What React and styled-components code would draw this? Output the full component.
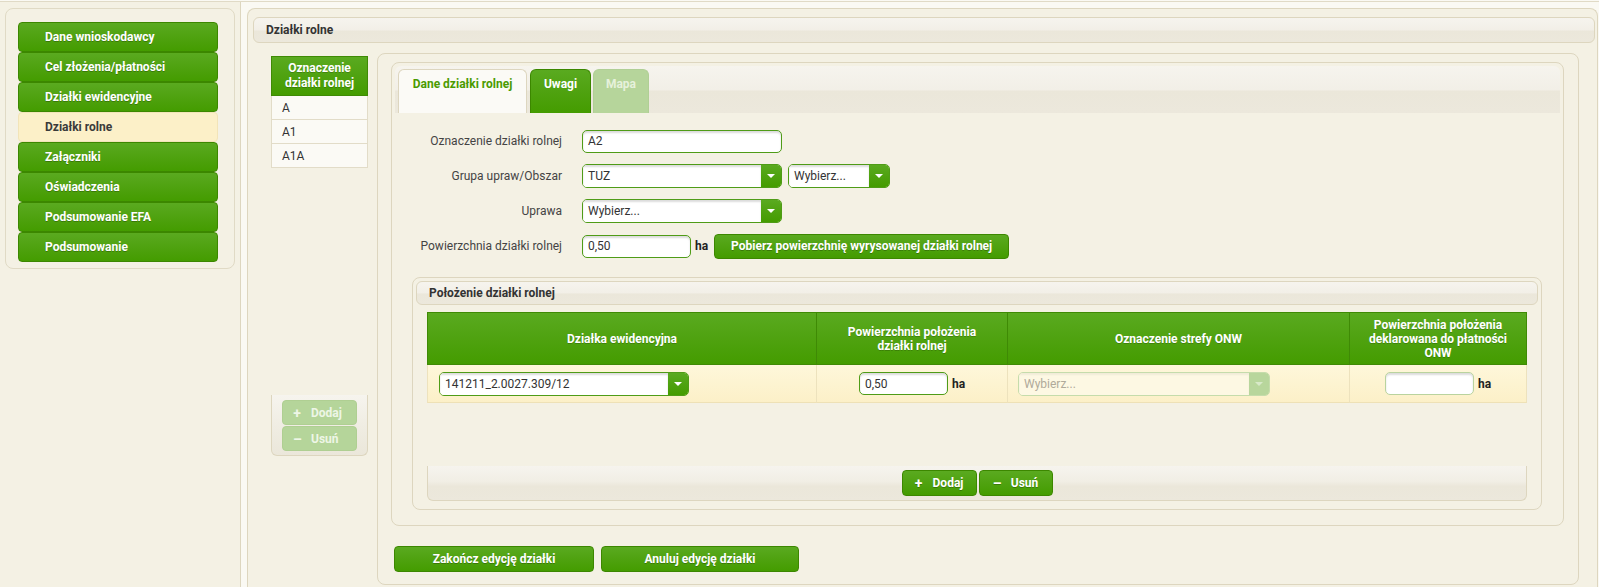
import styled, { createGlobalStyle } from "styled-components";

const GlobalStyle = createGlobalStyle`
  html, body {
    margin: 0;
    height: 100%;
    overflow: hidden;
    background: #faf9f3;
    font-family: Roboto, "Liberation Sans", sans-serif;
    font-size: 12px;
    color: #333;
  }
  * { box-sizing: border-box; }
`;

const green = "linear-gradient(#5aaa20 0%, #4fa210 50%, #449c00 100%)";
const gloss = "linear-gradient(#f6f4ee 0%, #f2efe7 50%, #ebe7da 54%, #ece8dc 100%)";

const Page = styled.div`
  display: flex;
  height: 586px;
  margin-top: 1px;
  border-top: 1px solid #e0dac6;
`;

const Sidebar = styled.aside`
  width: 241px;
  flex: none;
  padding-top: 6px;
  background: #f4f1e4;
  border-right: 1px solid #ddd6bf;
`;

const NavCard = styled.nav`
  margin-left: 5px;
  width: 230px;
  padding: 13px 0 6px 12px;
  border: 1px solid #e0dac5;
  border-radius: 8px;
  display: flex;
  flex-direction: column;
`;

const NavButton = styled.div`
  width: 200px;
  height: 30px;
  padding-left: 26px;
  display: flex;
  align-items: center;
  font-weight: 700;
  font-size: 12px;
  border-radius: 4px;
  border: 1px solid ${(p) => (p.$active ? "#f2e4b8" : "#3c8700")};
  background: ${(p) => (p.$active ? "#fcf0c8" : green)};
  color: ${(p) => (p.$active ? "#3a3a3a" : "#fff")};
  text-shadow: ${(p) => (p.$active ? "none" : "0 1px 0 rgba(0,0,0,0.25)")};
`;

const Main = styled.main`
  flex: 1;
  padding: 6px 1px 0 6px;
  background: #faf9f3;
  display: flex;
`;

const MainCard = styled.section`
  flex: 1;
  background: #f4f1e4;
  border: 1px solid #ddd6bf;
  border-bottom: none;
  border-radius: 8px 8px 0 0;
  padding: 8px 2px 0 5px;
`;

const HeaderBar = styled.div`
  height: 26px;
  display: flex;
  align-items: center;
  padding-left: 12px;
  font-weight: 700;
  font-size: 12px;
  color: #333;
  background: ${gloss};
  border: 1px solid #ddd6bf;
  border-radius: 6px;
`;

const Body = styled.div`
  display: flex;
  margin-top: 10px;
`;

const ListColumn = styled.div`
  width: 97px;
  height: 400px;
  margin: 3px 0 0 18px;
  display: flex;
  flex-direction: column;
  justify-content: space-between;
`;

const ListTable = styled.div`
  display: flex;
  flex-direction: column;
`;

const ListHead = styled.div`
  height: 40px;
  background: ${green};
  border: 1px solid #3f8a05;
  color: #fff;
  font-weight: 700;
  text-align: center;
  line-height: 15px;
  padding-top: 4px;
  text-shadow: 0 1px 0 rgba(0,0,0,0.2);
`;

const ListRow = styled.div`
  height: 24px;
  display: flex;
  align-items: center;
  padding-left: 10px;
  background: #fbfaf5;
  border: 1px solid #e2dcc8;
  border-top: none;
  color: #333;
`;

const ListFooter = styled.div`
  height: 61px;
  padding: 5px 0 0 10px;
  border: 1px solid #ddd6bf;
  border-top: none;
  border-radius: 0 0 6px 6px;
  background: linear-gradient(#f6f4ee 0%, #f0ede3 50%, #ebe7da 100%);
  display: flex;
  flex-direction: column;
  gap: 1px;
`;

const GreenButton = styled.button`
  width: ${(p) => p.$w}px;
  height: ${(p) => p.$h || 26}px;
  border-radius: 4px;
  font-family: inherit;
  font-weight: 700;
  font-size: 12px;
  display: flex;
  align-items: center;
  justify-content: ${(p) => (p.$left ? "flex-start" : "center")};
  padding: 0 0 0 ${(p) => (p.$left ? 10 : 0)}px;
  gap: 10px;
  border: 1px solid ${(p) => (p.$disabled ? "#afcf92" : "#3c8700")};
  background: ${(p) => (p.$disabled ? "#b5d59a" : green)};
  color: ${(p) => (p.$disabled ? "#eef6e6" : "#fff")};
  text-shadow: ${(p) => (p.$disabled ? "none" : "0 1px 0 rgba(0,0,0,0.25)")};
`;

const Sign = styled.span`
  font-size: 14px;
  font-weight: 700;
  width: 8px;
  text-align: center;
`;

const RightPanel = styled.div`
  flex: 1;
  margin: 0 16px 0 9px;
  height: 532px;
  border: 1px solid #ddd6bf;
  border-radius: 8px;
  padding: 8px 14px 9px 13px;
`;

const TabContainer = styled.div`
  border: 1px solid #ddd6bf;
  border-radius: 8px;
`;

const TabStrip = styled.div`
  margin: 3px 3px 0;
  padding: 3px 0 0 3px;
  height: 47px;
  display: flex;
  align-items: flex-end;
  border-radius: 6px 6px 0 0;
  background: ${gloss};
`;

const tabBg = { active: "#fbfaf6", green: green, off: "#b6d59b" };
const tabColor = { active: "#4a9a00", green: "#fff", off: "#e6f1db" };

const Tab = styled.div`
  width: ${(p) => p.$w}px;
  height: 44px;
  margin-right: ${(p) => p.$mr || 0}px;
  padding-top: 7px;
  text-align: center;
  font-weight: 700;
  font-size: 12px;
  border-radius: 6px 6px 0 0;
  background: ${(p) => tabBg[p.$kind]};
  color: ${(p) => tabColor[p.$kind]};
  border: 1px solid ${(p) => (p.$kind === "active" ? "#ddd6bf" : p.$kind === "green" ? "#3c8700" : "#b0cf95")};
  border-bottom: none;
`;

const TabContent = styled.div`
  padding: 15px 21px 15px 20px;
`;

const Form = styled.div`
  display: flex;
  flex-direction: column;
  gap: 9px;
  margin-left: -20px;
`;

const FormRow = styled.div`
  display: flex;
  align-items: center;
  height: 26px;
`;

const Label = styled.label`
  width: 170px;
  padding-right: 0;
  text-align: right;
  margin-right: 20px;
  color: #444;
  font-size: 12px;
`;

const TextInput = styled.div`
  width: ${(p) => p.$w}px;
  height: ${(p) => p.$h || 23}px;
  border: 1px solid ${(p) => (p.$soft ? "#b9d39e" : "#4f9c17")};
  border-radius: 5px;
  background: #fff;
  box-shadow: inset 0 2px 2px rgba(0, 0, 0, 0.14);
  padding: 0 5px;
  display: flex;
  align-items: center;
  color: #333;
`;

const Unit = styled.span`
  font-weight: 700;
  margin-left: 4px;
  color: #222;
`;

const SelectBox = styled.div`
  display: flex;
  width: ${(p) => p.$w}px;
  height: 24px;
  margin-right: ${(p) => p.$mr || 0}px;
  border: 1px solid ${(p) => (p.$disabled ? "#c5dcab" : "#4f9c17")};
  border-radius: 5px;
  overflow: hidden;
`;

const SelectField = styled.div`
  flex: 1;
  display: flex;
  align-items: center;
  padding: 0 5px;
  background: ${(p) => (p.$disabled ? "#fdf8e3" : "#fff")};
  box-shadow: inset 0 2px 2px rgba(0, 0, 0, ${(p) => (p.$disabled ? 0.05 : 0.14)});
  color: ${(p) => (p.$disabled ? "#b0aa9a" : "#333")};
`;

const SelectArrow = styled.div`
  width: 20px;
  display: flex;
  align-items: center;
  justify-content: center;
  background: ${(p) => (p.$disabled ? "#b8d69c" : green)};
  &::after {
    content: "";
    border-left: 4px solid transparent;
    border-right: 4px solid transparent;
    border-top: 4px solid ${(p) => (p.$disabled ? "#d8e9c8" : "#fff")};
  }
`;

const Fieldset = styled.div`
  margin-top: 18px;
  border: 1px solid #ddd6bf;
  border-radius: 8px;
  padding: 3px 3px 8px;
`;

const FieldsetHead = styled.div`
  height: 24px;
  display: flex;
  align-items: center;
  padding-left: 12px;
  font-weight: 700;
  font-size: 12px;
  color: #333;
  background: ${gloss};
  border: 1px solid #ddd6bf;
  border-radius: 6px;
`;

const Table = styled.div`
  margin: 7px 11px 0;
  display: grid;
  grid-template-columns: 390px 191px 342px 1fr;
`;

const Th = styled.div`
  height: 53px;
  display: flex;
  align-items: center;
  justify-content: center;
  text-align: center;
  line-height: 14px;
  font-weight: 700;
  font-size: 12px;
  color: #fff;
  text-shadow: 0 1px 0 rgba(0,0,0,0.2);
  background: ${green};
  border: 1px solid #3f8a05;
  border-left: ${(p) => (p.$first ? "1px solid #3f8a05" : "none")};
`;

const Td = styled.div`
  height: 38px;
  display: flex;
  align-items: center;
  justify-content: ${(p) => (p.$center ? "center" : "flex-start")};
  padding-left: ${(p) => (p.$center ? 0 : p.$pl || 11)}px;
  background: linear-gradient(#fef7da, #fcf0c8);
  border-bottom: 1px solid #eee1b6;
  border-right: 1px solid #ede2bd;
  border-left: ${(p) => (p.$first ? "1px solid #ede2bd" : "none")};
`;

const TableSpace = styled.div`
  height: 63px;
`;

const TableFooter = styled.div`
  margin: 0 11px;
  height: 35px;
  display: flex;
  justify-content: center;
  align-items: center;
  gap: 2px;
  border: 1px solid #ddd6bf;
  border-top: none;
  border-radius: 0 0 6px 6px;
  background: linear-gradient(#f6f4ee 0%, #f1eee5 45%, #ebe7da 60%, #ece8dc 100%);
`;

const ActionRow = styled.div`
  display: flex;
  gap: 7px;
  margin: 20px 0 0 3px;
`;

const navItems = [
  "Dane wnioskodawcy",
  "Cel złożenia/płatności",
  "Działki ewidencyjne",
  "Działki rolne",
  "Załączniki",
  "Oświadczenia",
  "Podsumowanie EFA",
  "Podsumowanie",
];

function Select({ value, w, mr, disabled }) {
  return (
    <SelectBox $w={w} $mr={mr} $disabled={disabled}>
      <SelectField $disabled={disabled}>{value}</SelectField>
      <SelectArrow $disabled={disabled} />
    </SelectBox>
  );
}

export default function App() {
  return (
    <>
      <GlobalStyle />
      <Page>
        <Sidebar>
          <NavCard>
            {navItems.map((n) => (
              <NavButton key={n} $active={n === "Działki rolne"}>
                {n}
              </NavButton>
            ))}
          </NavCard>
        </Sidebar>
        <Main>
          <MainCard>
            <HeaderBar>Działki rolne</HeaderBar>
            <Body>
              <ListColumn>
                <ListTable>
                  <ListHead>
                    Oznaczenie
                    <br />
                    działki rolnej
                  </ListHead>
                  <ListRow>A</ListRow>
                  <ListRow>A1</ListRow>
                  <ListRow>A1A</ListRow>
                </ListTable>
                <ListFooter>
                  <GreenButton $w={75} $h={25} $left $disabled>
                    <Sign>+</Sign>Dodaj
                  </GreenButton>
                  <GreenButton $w={75} $h={25} $left $disabled>
                    <Sign>–</Sign>Usuń
                  </GreenButton>
                </ListFooter>
              </ListColumn>
              <RightPanel>
                <TabContainer>
                  <TabStrip>
                    <Tab $kind="active" $w={129} $mr={3}>
                      Dane działki rolnej
                    </Tab>
                    <Tab $kind="green" $w={61} $mr={2}>
                      Uwagi
                    </Tab>
                    <Tab $kind="off" $w={56}>
                      Mapa
                    </Tab>
                  </TabStrip>
                  <TabContent>
                    <Form>
                      <FormRow>
                        <Label>Oznaczenie działki rolnej</Label>
                        <TextInput $w={200}>A2</TextInput>
                      </FormRow>
                      <FormRow>
                        <Label>Grupa upraw/Obszar</Label>
                        <Select value="TUZ" w={200} mr={6} />
                        <Select value="Wybierz..." w={102} />
                      </FormRow>
                      <FormRow>
                        <Label>Uprawa</Label>
                        <Select value="Wybierz..." w={200} />
                      </FormRow>
                      <FormRow>
                        <Label>Powierzchnia działki rolnej</Label>
                        <TextInput $w={109}>0,50</TextInput>
                        <Unit>ha</Unit>
                        <GreenButton $w={295} $h={25} style={{ marginLeft: 6 }}>
                          Pobierz powierzchnię wyrysowanej działki rolnej
                        </GreenButton>
                      </FormRow>
                    </Form>
                    <Fieldset>
                      <FieldsetHead>Położenie działki rolnej</FieldsetHead>
                      <Table>
                        <Th $first>Działka ewidencyjna</Th>
                        <Th>
                          Powierzchnia położenia
                          <br />
                          działki rolnej
                        </Th>
                        <Th>Oznaczenie strefy ONW</Th>
                        <Th>
                          Powierzchnia położenia
                          <br />
                          deklarowana do płatności
                          <br />
                          ONW
                        </Th>
                        <Td $first>
                          <Select value="141211_2.0027.309/12" w={250} />
                        </Td>
                        <Td $center>
                          <TextInput $w={89}>0,50</TextInput>
                          <Unit>ha</Unit>
                        </Td>
                        <Td $pl={10}>
                          <Select value="Wybierz..." w={252} disabled />
                        </Td>
                        <Td $center>
                          <TextInput $w={89} $soft />
                          <Unit>ha</Unit>
                        </Td>
                      </Table>
                      <TableSpace />
                      <TableFooter>
                        <GreenButton $w={75}>
                          <Sign>+</Sign>Dodaj
                        </GreenButton>
                        <GreenButton $w={74}>
                          <Sign>–</Sign>Usuń
                        </GreenButton>
                      </TableFooter>
                    </Fieldset>
                  </TabContent>
                </TabContainer>
                <ActionRow>
                  <GreenButton $w={200}>Zakończ edycję działki</GreenButton>
                  <GreenButton $w={198}>Anuluj edycję działki</GreenButton>
                </ActionRow>
              </RightPanel>
            </Body>
          </MainCard>
        </Main>
      </Page>
    </>
  );
}
